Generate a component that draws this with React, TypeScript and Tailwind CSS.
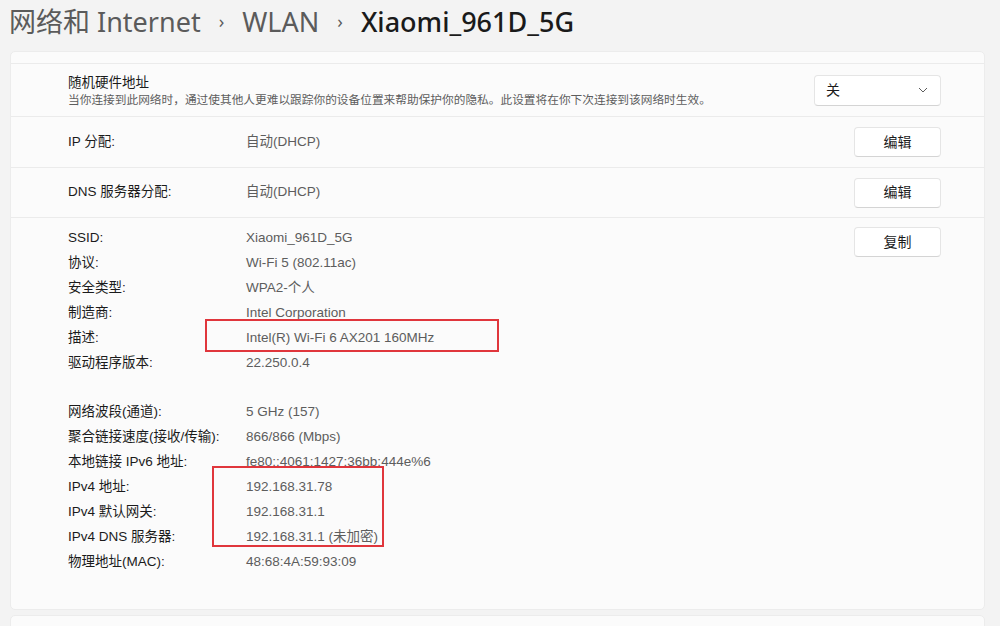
import React from "react";

const FONT = "font-['Liberation_Sans','Noto_Sans_CJK_SC',sans-serif]";

const infoA: [string, string][] = [
  ["SSID:", "Xiaomi_961D_5G"],
  ["协议:", "Wi-Fi 5 (802.11ac)"],
  ["安全类型:", "WPA2-个人"],
  ["制造商:", "Intel Corporation"],
  ["描述:", "Intel(R) Wi-Fi 6 AX201 160MHz"],
  ["驱动程序版本:", "22.250.0.4"],
];

const infoB: [string, string][] = [
  ["网络波段(通道):", "5 GHz (157)"],
  ["聚合链接速度(接收/传输):", "866/866 (Mbps)"],
  ["本地链接 IPv6 地址:", "fe80::4061:1427:36bb:444e%6"],
  ["IPv4 地址:", "192.168.31.78"],
  ["IPv4 默认网关:", "192.168.31.1"],
  ["IPv4 DNS 服务器:", "192.168.31.1 (未加密)"],
  ["物理地址(MAC):", "48:68:4A:59:93:09"],
];

function Button({ children }: { children: React.ReactNode }) {
  return (
    <button className="h-[30px] w-[87px] rounded-[4px] border border-[#e5e5e5] border-b-[#d4d4d4] bg-white text-[14px] text-[#1b1b1b]">
      {children}
    </button>
  );
}

function InfoRow({ label, value }: { label: string; value: string }) {
  return (
    <div className="flex h-[25px] items-center text-[13.5px]">
      <span className="w-[178px] shrink-0 text-[#1b1b1b]">{label}</span>
      <span className="text-[#5d5d5d]">{value}</span>
    </div>
  );
}

export default function App() {
  return (
    <div className={`relative h-[626px] w-[1000px] overflow-hidden bg-[#f3f3f3] ${FONT}`}>
      <div className="flex h-[42px] items-center gap-[18px] pl-[9px] font-['Noto_Sans','Noto_Sans_CJK_SC',sans-serif] text-[27px] leading-none">
        <span className="text-[#5b5b5b]">网络和 Internet</span>
        <span className="text-[18px] text-[#5b5b5b]">›</span>
        <span className="text-[#5b5b5b]">WLAN</span>
        <span className="text-[18px] text-[#5b5b5b]">›</span>
        <span className="font-medium text-[#1a1a1a]">Xiaomi_961D_5G</span>
      </div>

      <div className="ml-[10px] mt-[9px] w-[975px] rounded-[5px] border border-[#ececec] bg-[#fbfbfb]">
        <div className="h-[12px] border-b border-[#ebebeb]" />

        <div className="flex h-[53px] items-center justify-between border-b border-[#ebebeb] pl-[57px] pr-[43px]">
          <div className="flex flex-col">
            <span className="text-[13.5px] leading-[18px] text-[#1b1b1b]">随机硬件地址</span>
            <span className="text-[11.7px] leading-[15px] text-[#5d5d5d]">
              当你连接到此网络时，通过使其他人更难以跟踪你的设备位置来帮助保护你的隐私。此设置将在你下次连接到该网络时生效。
            </span>
          </div>
          <div className="flex h-[31px] w-[127px] items-center justify-between rounded-[4px] border border-[#e5e5e5] border-b-[#d4d4d4] bg-white pl-[11px] pr-[12px] text-[14px] text-[#1b1b1b]">
            <span>关</span>
            <svg width="10" height="6" viewBox="0 0 10 6" fill="none">
              <path d="M1 1l4 4 4-4" stroke="#5d5d5d" strokeWidth="1" />
            </svg>
          </div>
        </div>

        <div className="flex h-[51px] items-center justify-between border-b border-[#ebebeb] pl-[57px] pr-[43px] text-[13.5px]">
          <div className="flex">
            <span className="w-[178px] text-[#1b1b1b]">IP 分配:</span>
            <span className="text-[#5d5d5d]">自动(DHCP)</span>
          </div>
          <Button>编辑</Button>
        </div>

        <div className="flex h-[50px] items-center justify-between border-b border-[#ebebeb] pl-[57px] pr-[43px] text-[13.5px]">
          <div className="flex">
            <span className="w-[178px] text-[#1b1b1b]">DNS 服务器分配:</span>
            <span className="text-[#5d5d5d]">自动(DHCP)</span>
          </div>
          <Button>编辑</Button>
        </div>

        <div className="flex justify-between pb-[34px] pl-[57px] pr-[43px] pt-[8px]">
          <div className="flex flex-col">
            {infoA.map(([l, v]) => (
              <InfoRow key={l} label={l} value={v} />
            ))}
            <div className="h-[24px]" />
            {infoB.map(([l, v]) => (
              <InfoRow key={l} label={l} value={v} />
            ))}
          </div>
          <div className="pt-[1px]">
            <Button>复制</Button>
          </div>
        </div>
      </div>

      <div className="ml-[10px] mt-[5px] h-[40px] w-[975px] rounded-[5px] border border-[#ececec] bg-[#fbfbfb]" />

      <div className="absolute left-[205px] top-[319px] h-[33px] w-[294px] border-2 border-[#e0363c]" />
      <div className="absolute left-[212px] top-[466px] h-[81px] w-[172px] border-2 border-[#e0363c]" />
    </div>
  );
}
